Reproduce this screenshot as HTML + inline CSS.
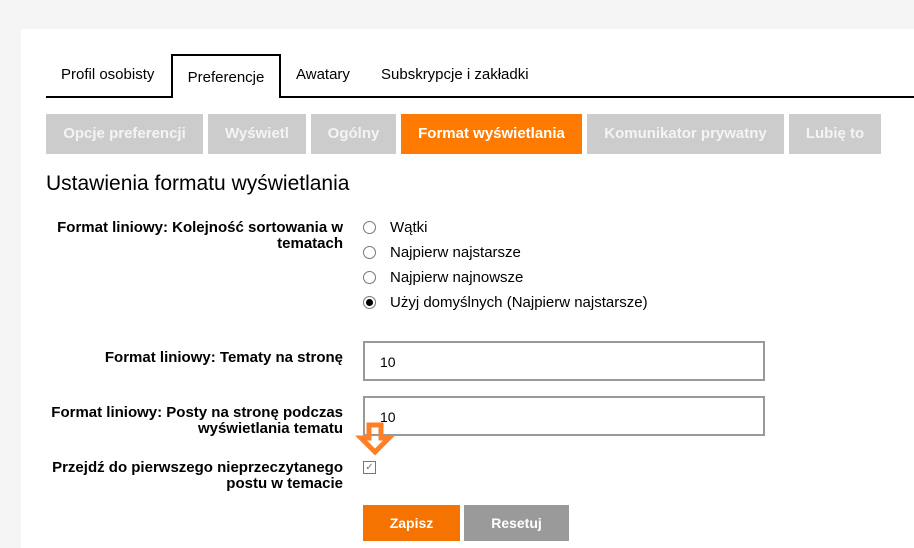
<!DOCTYPE html>
<html><head><meta charset="utf-8"><style>
*{margin:0;padding:0;box-sizing:border-box}
body{width:914px;height:548px;background:#f5f5f5;font-family:"Liberation Sans",Arial,sans-serif;position:relative;overflow:hidden;color:#000}
.panel{position:absolute;left:21px;top:29px;right:0;bottom:0;background:#fff}
.a{position:absolute}
.tab{position:absolute;top:66px;font-size:15px}
.line{position:absolute;left:46px;top:96px;width:868px;height:2px;background:#000}
.act{position:absolute;left:171px;top:54px;width:110px;height:44px;border:2px solid #000;border-bottom:none;background:#fff;font-size:15px;text-align:center;padding-top:13px}
.st{position:absolute;top:114px;height:40px;background:#ccc;color:#f4f4f4;font-weight:bold;font-size:15px;text-align:center;line-height:40px}
.lbl{position:absolute;right:571px;font-weight:bold;font-size:15px;text-align:right;line-height:16px;white-space:nowrap}
.r{position:absolute;left:363px;width:13px;height:13px;border:1px solid #767676;border-radius:50%}
.rt{position:absolute;left:390px;font-size:15px}
.in{position:absolute;left:363px;width:402px;height:40px;border:2px solid #999;font-size:14px;padding:11px 0 0 15px}
.btn{position:absolute;top:505px;height:36px;color:#fff;font-weight:bold;font-size:14px;text-align:center;line-height:36px}
</style></head><body>
<div class="panel"></div>
<div class="tab" style="left:61px">Profil osobisty</div>
<div class="tab" style="left:296px">Awatary</div>
<div class="tab" style="left:381px">Subskrypcje i zakładki</div>
<div class="line"></div>
<div class="act">Preferencje</div>
<div class="st" style="left:46px;width:157px">Opcje preferencji</div>
<div class="st" style="left:208px;width:98px">Wyświetl</div>
<div class="st" style="left:311px;width:85px">Ogólny</div>
<div class="st" style="left:401px;width:181px;background:#ff7a00;color:#fff">Format wyświetlania</div>
<div class="st" style="left:587px;width:197px">Komunikator prywatny</div>
<div class="st" style="left:789px;width:92px">Lubię to</div>
<div class="a" style="left:46px;top:172px;font-size:21px">Ustawienia formatu wyświetlania</div>
<div class="lbl" style="top:220px">Format liniowy: Kolejność sortowania w<br>tematach</div>
<div class="r" style="top:221px"></div><div class="rt" style="top:219px">Wątki</div>
<div class="r" style="top:246px"></div><div class="rt" style="top:244px">Najpierw najstarsze</div>
<div class="r" style="top:271px"></div><div class="rt" style="top:269px">Najpierw najnowsze</div>
<div class="r" style="top:296px"></div><div class="a" style="left:366px;top:299px;width:7px;height:7px;border-radius:50%;background:#000"></div><div class="rt" style="top:294px">Użyj domyślnych (Najpierw najstarsze)</div>
<div class="lbl" style="top:350px">Format liniowy: Tematy na stronę</div>
<div class="in" style="top:341px">10</div>
<div class="lbl" style="top:405px">Format liniowy: Posty na stronę podczas<br>wyświetlania tematu</div>
<div class="in" style="top:396px">10</div>
<div class="lbl" style="top:460px">Przejdź do pierwszego nieprzeczytanego<br>postu w temacie</div>
<div class="a" style="left:363px;top:461px;width:13px;height:13px;border:1px solid #767676;font-size:10px;color:#777;line-height:11px;text-align:center">✓</div>
<svg class="a" style="left:355px;top:420px" width="40" height="40"><path d="M14 5 H26 V18 H34 L20 32 L6 18 H14 Z" fill="none" stroke="#ff7f27" stroke-width="5" stroke-linejoin="miter"/></svg>
<div class="btn" style="left:363px;width:97px;background:#f57300">Zapisz</div>
<div class="btn" style="left:464px;width:105px;background:#9a9a9a">Resetuj</div>
</body></html>
